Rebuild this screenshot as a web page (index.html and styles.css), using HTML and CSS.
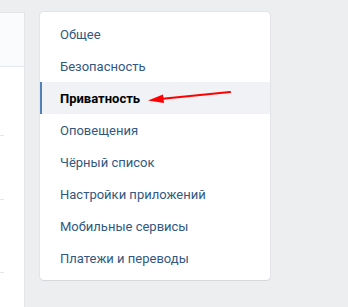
FILE: index.html
```html
<!DOCTYPE html>
<html lang="ru">
<head>
<meta charset="utf-8">
<link rel="stylesheet" href="styles.css">
</head>
<body>
<div class="page">
  <div class="left-card">
    <div class="left-head"></div>
    <div class="left-row r1"></div>
    <div class="left-row r2"></div>
    <div class="left-row r3"></div>
  </div>
  <nav class="menu">
    <a class="item">Общее</a>
    <a class="item">Безопасность</a>
    <a class="item active">Приватность
      <svg class="arrow" width="90" height="16" viewBox="0 0 90 16">
        <line x1="12" y1="10" x2="82" y2="3" stroke="#ff0000" stroke-width="2.2" stroke-linecap="round"/>
        <polygon points="0,11.5 15,5.5 16,14" fill="#ff0000"/>
      </svg>
    </a>
    <a class="item">Оповещения</a>
    <a class="item">Чёрный список</a>
    <a class="item">Настройки приложений</a>
    <a class="item">Мобильные сервисы</a>
    <a class="item">Платежи и переводы</a>
  </nav>
</div>
</body>
</html>
```

FILE: styles.css
```css
html, body {
  margin: 0;
  padding: 0;
  background: #edeef0;
  height: 100%;
  overflow: hidden;
}
.page {
  display: flex;
  align-items: flex-start;
  gap: 15px;
  padding-top: 12px;
  font-family: Roboto, "Open Sans", Arial, sans-serif;
  font-size: 13px;
}
.left-card {
  width: 24px;
  height: 300px;
  background: #fff;
  border-right: 1px solid #e3e4e8;
  border-top: 1px solid #e3e4e8;
  box-sizing: content-box;
  overflow: hidden;
}
.left-head {
  height: 53px;
  background: #fafbfc;
  border-bottom: 1px solid #e7e8ec;
}
.left-row {
  margin-right: 20px;
  border-bottom: 1px solid #e7e8ec;
}
.r1 { height: 68px; }
.r2 { height: 63px; }
.r3 { height: 72px; }
.menu {
  width: 230px;
  background: #fff;
  border-radius: 4px;
  box-shadow: 0 1px 0 0 #d7d8db, 0 0 0 1px #e3e4e8;
  padding: 6px 0;
  display: flex;
  flex-direction: column;
}
.item {
  position: relative;
  display: flex;
  align-items: center;
  height: 32px;
  color: #32587f;
  border-left: 2px solid transparent;
  padding-left: 18px;
  cursor: pointer;
}
.item.active {
  background: #f0f2f5;
  border-left-color: #5181b8;
  color: #000;
  font-weight: 700;
}
.arrow {
  position: absolute;
  left: 106px;
  top: 7px;
}
```
